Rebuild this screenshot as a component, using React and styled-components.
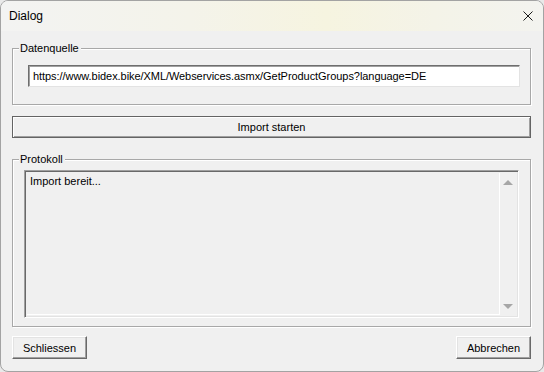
import React from 'react';
import styled, { createGlobalStyle } from 'styled-components';

const GlobalStyle = createGlobalStyle`
  html, body {
    margin: 0;
    padding: 0;
    background: #e9e9e9;
  }
  * {
    box-sizing: border-box;
  }
`;

const Window = styled.div`
  width: 544px;
  height: 372px;
  border: 1px solid #a3a3a3;
  border-radius: 8px;
  overflow: hidden;
  background: #f0f0f0;
  display: flex;
  flex-direction: column;
  font-family: "Liberation Sans", Arial, sans-serif;
  font-size: 11px;
  color: #000;
`;

const TitleBar = styled.div`
  height: 30px;
  display: flex;
  align-items: center;
  justify-content: space-between;
  padding: 0 8px 0 8px;
  background: linear-gradient(90deg, #f3f3f2 0%, #f4f3ea 35%, #f6f4e0 60%, #f4f3e8 80%, #f3f3ef 100%);
`;

const Title = styled.span`
  font-size: 12px;
  margin-top: -1px;
`;

const CloseButton = styled.button`
  width: 14px;
  height: 14px;
  border: 0;
  padding: 0;
  background: transparent;
  display: flex;
  align-items: center;
  justify-content: center;
`;

const Body = styled.div`
  flex: 1;
  display: flex;
  flex-direction: column;
  padding: 17px 12px 0 11px;
`;

const Group = styled.div`
  position: relative;
  border: 1px solid #a8a8a8;
  box-shadow: inset 1px 1px 0 #fff, 1px 1px 0 #fff;
  margin-top: ${(p) => p.$top || 0}px;
  padding: ${(p) => p.$pad};
`;

const GroupLabel = styled.span`
  position: absolute;
  top: -8px;
  left: 6px;
  padding: 0 2px 0 1px;
  line-height: 14px;
  background: #f0f0f0;
`;

const TextInput = styled.input`
  display: block;
  width: 492px;
  height: 22px;
  margin: 0;
  padding: 0 0 1px 4px;
  font: inherit;
  letter-spacing: -0.06px;
  color: #000;
  background: #fff;
  border-style: solid;
  border-width: 1px;
  border-color: #6e6e6e #e3e3e3 #e3e3e3 #6e6e6e;
  box-shadow: inset 1px 1px 0 #a0a0a0;
  outline: none;
`;

const Button = styled.button`
  height: ${(p) => p.$h || 22}px;
  width: ${(p) => (p.$w ? `${p.$w}px` : 'auto')};
  margin: 0;
  padding: 0;
  font: inherit;
  color: #000;
  background: #f0f0f0;
  border-style: solid;
  border-width: 1px;
  border-color: ${(p) => (p.$default ? '#646464' : '#fff #696969 #696969 #fff')};
  box-shadow: ${(p) =>
    p.$default
      ? 'inset 1px 1px 0 #fff, inset -1px -1px 0 #a0a0a0'
      : 'inset -1px -1px 0 #a0a0a0, inset 1px 1px 0 #e3e3e3'};
`;

const WideButton = styled(Button)`
  margin-top: 11px;
`;

const LogBox = styled.div`
  width: 495px;
  height: 148px;
  display: flex;
  border-style: solid;
  border-width: 1px;
  border-color: #a0a0a0 #fff #fff #a0a0a0;
  box-shadow: inset 1px 1px 0 #696969, inset -1px -1px 0 #e3e3e3;
  padding: 2px;
`;

const LogText = styled.div`
  flex: 1;
  padding: 1px 3px;
  line-height: 14px;
  border-bottom: 1px solid #fff;
`;

const ScrollBar = styled.div`
  width: 17px;
  border-left: 1px solid #fff;
  display: flex;
  flex-direction: column;
  justify-content: space-between;
  align-items: center;
  padding: 7px 0 6px;
`;

const Arrow = styled.span`
  width: 0;
  height: 0;
  border-left: 5px solid transparent;
  border-right: 5px solid transparent;
  ${(p) => (p.$down ? 'border-top: 5px solid #a6a6a6;' : 'border-bottom: 5px solid #a6a6a6;')}
`;

const Footer = styled.div`
  display: flex;
  justify-content: space-between;
  margin-top: 9px;
`;

export default function App() {
  return (
    <>
      <GlobalStyle />
      <Window>
        <TitleBar>
          <Title>Dialog</Title>
          <CloseButton aria-label="Schliessen">
            <svg width="10" height="10" viewBox="0 0 10 10">
              <path d="M0.5 0.5 L9.5 9.5 M9.5 0.5 L0.5 9.5" stroke="#1a1a1a" strokeWidth="1" />
            </svg>
          </CloseButton>
        </TitleBar>
        <Body>
          <Group $pad="16px 10px 17px 15px">
            <GroupLabel>Datenquelle</GroupLabel>
            <TextInput
              readOnly
              value="https://www.bidex.bike/XML/Webservices.asmx/GetProductGroups?language=DE"
            />
          </Group>
          <WideButton $default>Import starten</WideButton>
          <Group $top={21} $pad="10px 11px 8px 11px">
            <GroupLabel>Protokoll</GroupLabel>
            <LogBox>
              <LogText>Import bereit...</LogText>
              <ScrollBar>
                <Arrow />
                <Arrow $down />
              </ScrollBar>
            </LogBox>
          </Group>
          <Footer>
            <Button $w={75} $h={23}>Schliessen</Button>
            <Button $w={75} $h={23}>Abbrechen</Button>
          </Footer>
        </Body>
      </Window>
    </>
  );
}
